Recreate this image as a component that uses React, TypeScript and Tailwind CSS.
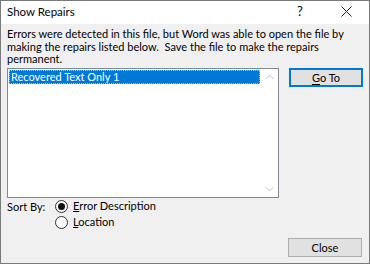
import React, { useState } from 'react';

const ChevronUp = () => (
  <svg width="9" height="6" viewBox="0 0 9 6" fill="none">
    <path d="M0.5 5 L4.5 1 L8.5 5" stroke="#c2c2c2" strokeWidth="1" />
  </svg>
);

const ChevronDown = () => (
  <svg width="9" height="6" viewBox="0 0 9 6" fill="none">
    <path d="M0.5 1 L4.5 5 L8.5 1" stroke="#c2c2c2" strokeWidth="1" />
  </svg>
);

const Radio = ({ checked }: { checked: boolean }) => (
  <span className="flex h-[13px] w-[13px] items-center justify-center rounded-full border border-[#333] bg-white">
    {checked && <span className="h-[7px] w-[7px] rounded-full bg-[#111]" />}
  </span>
);

const App = () => {
  const [sort, setSort] = useState('error');
  return (
    <div
      className="flex h-[264px] w-[370px] flex-col border border-[#7a7a7a] bg-[#f0f0f0] text-[11px] text-black"
      style={{ fontFamily: 'Lato, "Noto Sans", sans-serif' }}
    >
      <div className="flex h-[23px] items-center bg-white pl-[6px] pb-[2px]">
        <span className="flex-1 text-[11.5px] leading-none">Show Repairs</span>
        <span className="w-[46px] text-center text-[13px] leading-none">?</span>
        <span className="flex w-[46px] items-center justify-center">
          <svg width="11" height="11" viewBox="0 0 11 11">
            <path d="M0.5 0.5 L10.5 10.5 M10.5 0.5 L0.5 10.5" stroke="#222" strokeWidth="1" />
          </svg>
        </span>
      </div>

      <div className="flex flex-1 flex-col px-[6px] pt-[4px]">
        <p className="whitespace-nowrap leading-[12.5px]">
          Errors were detected in this file, but Word was able to open the file by
          <br />
          making the repairs listed below.&nbsp; Save the file to make the repairs
          <br />
          permanent.
        </p>

        <div className="mt-[2px] flex gap-[10px]">
          <div className="flex h-[130px] w-[272px] border border-[#828790] bg-white">
            <div className="flex-1 p-[1px]">
              <div className="flex h-[14px] items-center border border-dotted border-[#99c9ef] bg-[#0078d7] pl-[1px] leading-none text-white">
                Recovered Text Only 1
              </div>
            </div>
            <div className="flex w-[17px] flex-col items-center justify-between py-[5px]">
              <ChevronUp />
              <ChevronDown />
            </div>
          </div>
          <button className="flex h-[19px] w-[74px] items-center justify-center border-2 border-[#0078d7] bg-[#e1e1e1] leading-none">
            <span className="underline underline-offset-2">G</span>o To
          </button>
        </div>

        <div className="mt-[1px] flex">
          <span className="w-[48px] leading-[16px]">Sort By:</span>
          <div className="flex flex-col">
            <label className="flex h-[16px] items-center gap-[5px]" onClick={() => setSort('error')}>
              <Radio checked={sort === 'error'} />
              <span><span className="underline underline-offset-1">E</span>rror Description</span>
            </label>
            <label className="flex h-[16px] items-center gap-[5px]" onClick={() => setSort('location')}>
              <Radio checked={sort === 'location'} />
              <span><span className="underline underline-offset-1">L</span>ocation</span>
            </label>
          </div>
        </div>

        <div className="mt-auto mb-[6px] flex justify-end pr-[1px]">
          <button className="flex h-[19px] w-[74px] items-center justify-center border border-[#adadad] bg-[#e1e1e1] leading-none">
            Close
          </button>
        </div>
      </div>
    </div>
  );
};

export default App;
